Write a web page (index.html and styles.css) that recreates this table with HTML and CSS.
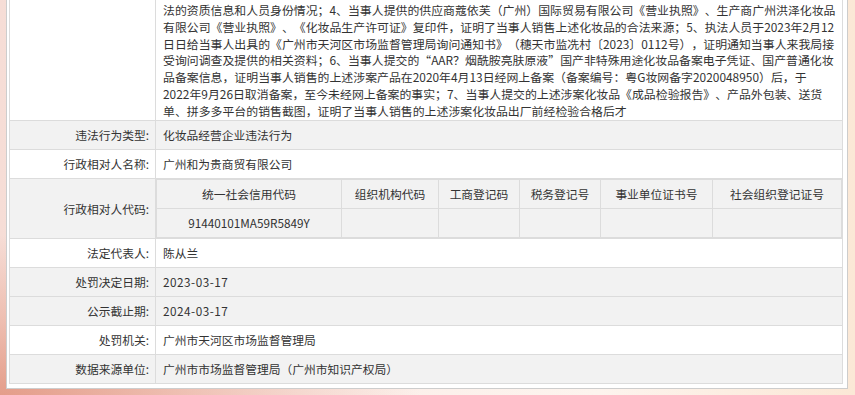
FILE: index.html
```html
<!DOCTYPE html>
<html lang="zh-CN">
<head>
<meta charset="utf-8">
<title>行政处罚信息</title>
<link rel="stylesheet" href="styles.css">
</head>
<body>
<div class="panel">
  <table class="info">
    <colgroup><col class="col-label"><col></colgroup>
    <tr class="row-white first">
      <th></th>
      <td class="long-text">法的资质信息和人员身份情况；4、当事人提供的供应商蔻依芙（广州）国际贸易有限公司《营业执照》、生产商广州洪泽化妆品<br>有限公司《营业执照》、《化妆品生产许可证》复印件，证明了当事人销售上述化妆品的合法来源；5、执法人员于2023年2月12<br>日日给当事人出具的《广州市天河区市场监督管理局询问通知书》（穗天市监冼村〔2023〕0112号），证明通知当事人来我局接<br>受询问调查及提供的相关资料；6、当事人提交的“AAR？烟酰胺亮肤原液”国产非特殊用途化妆品备案电子凭证、国产普通化妆<br>品备案信息，证明当事人销售的上述涉案产品在2020年4月13日经网上备案（备案编号：粤G妆网备字2020048950）后，于<br>2022年9月26日取消备案，至今未经网上备案的事实；7、当事人提交的上述涉案化妆品《成品检验报告》、产品外包装、送货<br>单、拼多多平台的销售截图，证明了当事人销售的上述涉案化妆品出厂前经检验合格后才</td>
    </tr>
    <tr class="row-gray">
      <th>违法行为类型:</th>
      <td>化妆品经营企业违法行为</td>
    </tr>
    <tr class="row-white">
      <th>行政相对人名称:</th>
      <td>广州和为贵商贸有限公司</td>
    </tr>
    <tr class="row-gray">
      <th>行政相对人代码:</th>
      <td class="nested">
        <table class="codes">
          <colgroup>
            <col class="cc1"><col class="cc2"><col class="cc3"><col class="cc4"><col class="cc5"><col>
          </colgroup>
          <tr>
            <td>统一社会信用代码</td>
            <td>组织机构代码</td>
            <td>工商登记码</td>
            <td>税务登记号</td>
            <td>事业单位证书号</td>
            <td>社会组织登记证号</td>
          </tr>
          <tr>
            <td>91440101MA59R5849Y</td>
            <td></td>
            <td></td>
            <td></td>
            <td></td>
            <td></td>
          </tr>
        </table>
      </td>
    </tr>
    <tr class="row-white">
      <th>法定代表人:</th>
      <td>陈从兰</td>
    </tr>
    <tr class="row-gray">
      <th>处罚决定日期:</th>
      <td class="date">2023-03-17</td>
    </tr>
    <tr class="row-gray">
      <th>公示截止期:</th>
      <td class="date">2024-03-17</td>
    </tr>
    <tr class="row-white">
      <th>处罚机关:</th>
      <td>广州市天河区市场监督管理局</td>
    </tr>
    <tr class="row-gray">
      <th>数据来源单位:</th>
      <td>广州市市场监督管理局（广州市知识产权局）</td>
    </tr>
  </table>
</div>
</body>
</html>
```

FILE: styles.css
```css
html, body {
  margin: 0;
  padding: 0;
}

body {
  width: 855px;
  height: 395px;
  overflow: hidden;
  font-family: "Noto Sans CJK SC", "Microsoft YaHei", sans-serif;
  font-size: 11.75px;
  color: #333;
  text-spacing-trim: space-all;
  background:
    radial-gradient(ellipse 420px 160px at 0% 100%, #e49d8a 0%, rgba(232, 168, 150, 0.6) 45%, rgba(250, 236, 230, 0) 100%),
    linear-gradient(to right, #f6ddd6 0%, #fbeee9 35%, #fdf4ee 70%, #fbe8d6 100%);
}

.panel {
  margin: 0 7px 0 6px;
  padding: 0 4px 4px 2px;
  border: 1px solid #cdcdcd;
  border-top: none;
  background: #fff;
}

.info {
  width: 100%;
  border-collapse: collapse;
  table-layout: fixed;
}

.col-label {
  width: 146px;
}

.info > tbody > tr > th,
.info > tbody > tr > td {
  border: 1px solid #dcdcdc;
  height: 28px;
  padding: 0 7px;
  font-weight: normal;
  vertical-align: middle;
}

.info > tbody > tr > th {
  text-align: right;
  padding-right: 6px;
}

.info > tbody > tr.first > th,
.info > tbody > tr.first > td {
  border-top: none;
}

.row-gray > th,
.row-gray > td {
  background: #f2f2f2;
}

.row-white > th,
.row-white > td {
  background: #fff;
}

.info > tbody > tr > td.long-text {
  font-size: 11.9px;
  line-height: 16.8px;
  padding: 2px 0 0 7px;
  vertical-align: top;
  white-space: nowrap;
}

.date {
  letter-spacing: 0.5px;
}

.info > tbody > tr > td.nested {
  padding: 0;
}

.codes {
  width: 100%;
  border-collapse: collapse;
  table-layout: fixed;
  background: #f2f2f2;
}

.codes td {
  border: 1px solid #dcdcdc;
  height: 28px;
  padding: 0;
  text-align: center;
  vertical-align: middle;
}

.cc1 { width: 185px; }
.cc2 { width: 97px; }
.cc3 { width: 81px; }
.cc4 { width: 81px; }
.cc5 { width: 112px; }
```
